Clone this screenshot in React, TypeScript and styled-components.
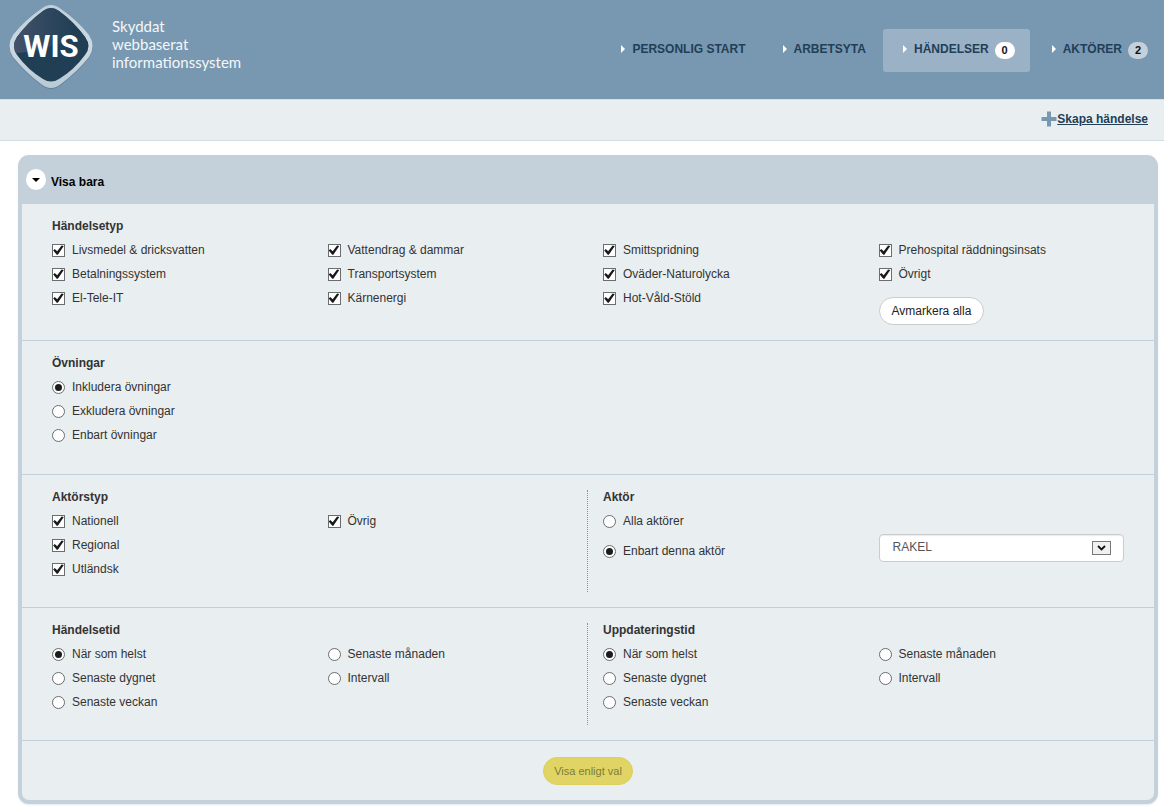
import React, { useState } from "react";
import styled, { createGlobalStyle, css } from "styled-components";

const GlobalStyle = createGlobalStyle`
  *, *::before, *::after { box-sizing: border-box; }
  body {
    margin: 0;
    background: #ffffff;
    color: #333333;
    font-family: "Liberation Sans", Arial, sans-serif;
    font-size: 12px;
    line-height: 24px;
  }
`;

const Header = styled.header`
  display: flex;
  justify-content: space-between;
  align-items: flex-start;
  min-height: 99px;
  padding-right: 1px;
  background: #7897b1;
`;

const Brand = styled.a`
  display: flex;
  gap: 16px;
  padding: 2px 0 0 6px;
  color: #f3f7fa;
  text-decoration: none;
`;

const Tagline = styled.span`
  padding-top: 15px;
  font-family: Lato, "Open Sans", sans-serif;
  font-size: 15px;
  line-height: 18px;
`;

const Nav = styled.nav`
  display: flex;
  gap: 2px;
  padding-top: 29px;
`;

const NavLink = styled.a<{ $active?: boolean }>`
  display: flex;
  align-items: center;
  height: 43px;
  padding: 0 15px 4px 20px;
  border: 0;
  border-radius: 3px;
  background: ${(p) => (p.$active ? "#9bb1c5" : "transparent")};
  color: #213f57;
  font-weight: bold;
  line-height: 18px;
  text-decoration: none;
  white-space: nowrap;

  &::before {
    content: "";
    margin-right: 7px;
    border-left: 4px solid #ffffff;
    border-top: 4px solid transparent;
    border-bottom: 4px solid transparent;
  }
`;

const Badge = styled.span<{ $light?: boolean }>`
  min-width: 20px;
  height: 17px;
  margin: 3px 0 0 6px;
  border-radius: 9px;
  background: ${(p) => (p.$light ? "#ffffff" : "#c4d0da")};
  color: #111111;
  font-size: 11px;
  line-height: 17px;
  text-align: center;
`;

const ActionBar = styled.div`
  display: flex;
  justify-content: flex-end;
  align-items: center;
  height: 42px;
  padding: 0 16px 2px 16px;
  border-top: 1px solid #d3dfe8;
  border-bottom: 1px solid #d3dde5;
  background: #e9eef1;
`;

const CreateLink = styled.a`
  display: flex;
  align-items: center;
  color: #213f57;
  font-weight: bold;
  text-decoration: underline;
`;

const Panel = styled.main`
  margin: 14px 6px 7px 18px;
  padding: 0 4px 4px;
  border-radius: 11px;
  background: #c4d0da;
  box-shadow: 0 1px 2px #e6eaed;
`;

const PanelHeader = styled.div`
  display: flex;
  align-items: center;
  gap: 5px;
  height: 49px;
  padding-left: 4px;
`;

const ToggleButton = styled.button`
  display: grid;
  place-items: center;
  width: 20px;
  height: 21px;
  padding: 0;
  border: 0;
  border-radius: 50%;
  background: #ffffff;
`;

const PanelTitle = styled.h1`
  margin: 0;
  padding-top: 4px;
  color: #000000;
  font-size: 12px;
  line-height: 24px;
`;

const PanelBody = styled.form`
  border-radius: 0 0 7px 7px;
  background: #e9eef1;
`;

const Section = styled.section<{ $split?: boolean }>`
  display: grid;
  grid-template-columns: repeat(${(p) => (p.$split ? 2 : 1)}, 1fr);
  grid-auto-rows: minmax(${(p) => (p.$split ? 102 : 103)}px, auto);
  padding: 15px 0 15px 30px;
  border-bottom: 1px solid #c1d0da;
`;

const Half = styled.div<{ $divided?: boolean }>`
  min-width: 0;
  ${(p) =>
    p.$divided &&
    css`
      margin-left: -16px;
      padding-left: 15px;
      border-left: 1px dotted #8c9399;
    `}
`;

const Group = styled.fieldset`
  min-width: 0;
  margin: 0;
  padding: 0;
  border: 0;
`;

const GroupTitle = styled.legend`
  margin: 0 0 5px;
  padding: 0;
  font-weight: bold;
  line-height: 14px;
`;

const Columns = styled.div<{ $count: number }>`
  display: grid;
  grid-template-columns: repeat(${(p) => p.$count}, 1fr);
`;

const Option = styled.label<{ $spaced?: boolean }>`
  display: flex;
  align-items: center;
  gap: 7px;
  height: 24px;
  margin-top: ${(p) => (p.$spaced ? 6 : 0)}px;
`;

const Checkbox = styled.input.attrs({ type: "checkbox" })`
  appearance: none;
  width: 13px;
  height: 13px;
  margin: 0;
  border: 1px solid #6a6d70;
  background: #ffffff;

  &:checked::before {
    content: "";
    display: block;
    width: 11px;
    height: 11px;
    background: #1a1a1a;
    clip-path: polygon(2% 54%, 16% 40%, 38% 62%, 78% 8%, 98% 14%, 44% 94%, 34% 94%);
  }
`;

const Radio = styled.input.attrs({ type: "radio" })`
  appearance: none;
  display: grid;
  place-items: center;
  width: 13px;
  height: 13px;
  margin: 0;
  border: 1px solid #6a6d70;
  border-radius: 50%;
  background: #ffffff;

  &:checked::before {
    content: "";
    width: 7px;
    height: 7px;
    border-radius: 50%;
    background: #1c1c1c;
  }
`;

const PillButton = styled.button<{ $primary?: boolean }>`
  height: 28px;
  padding: 0 ${(p) => (p.$primary ? 10 : 12)}px;
  border: 1px solid ${(p) => (p.$primary ? "#ddd058" : "#cccccc")};
  border-radius: 14px;
  background: ${(p) => (p.$primary ? "#e0d564" : "#ffffff")};
  color: ${(p) => (p.$primary ? "#7e7a38" : "#222222")};
  font-family: inherit;
  font-size: ${(p) => (p.$primary ? 11 : 12)}px;
`;

const ClearRow = styled.div`
  display: flex;
  padding-top: 11px;
`;

const SelectBox = styled.div`
  position: relative;
  margin: 25px 30px 0 0;
`;

const Select = styled.select`
  appearance: none;
  display: block;
  width: 100%;
  height: 28px;
  padding: 0 32px 2px 13px;
  border: 1px solid #cccccc;
  border-radius: 4px;
  background: #ffffff;
  box-shadow: inset 0 1px 1px #ececec;
  color: #555555;
  font-family: inherit;
  font-size: 12px;
`;

const SelectArrow = styled.svg`
  position: absolute;
  top: 7px;
  right: 13px;
  pointer-events: none;
`;

const Footer = styled.div`
  display: flex;
  justify-content: center;
  padding: 16px 0 15px;
`;

const Logo = () => (
  <svg width="90" height="90" viewBox="0 0 90 90" role="img" aria-label="WIS">
    <defs>
      <linearGradient id="rim" x1="0" y1="0" x2="0" y2="1">
        <stop offset="0" stopColor="#bfced9" />
        <stop offset="0.5" stopColor="#ccd9e1" />
        <stop offset="1" stopColor="#b9cad6" />
      </linearGradient>
      <linearGradient id="sheen" x1="0" y1="0" x2="1" y2="0">
        <stop offset="0.1" stopColor="#42526a" />
        <stop offset="0.75" stopColor="#203f55" />
      </linearGradient>
      <clipPath id="face">
        <path d="M37 9 Q45 3 53 9 Q68 20 79 35 Q86 44 79 53 Q68 68 53 77 Q45 82 37 77 Q22 68 11 53 Q5 44 11 35 Q22 20 37 9 Z" />
      </clipPath>
    </defs>
    <path
      d="M35 8 Q45 0 55 8 Q71 19 83 34 Q90 45 83 56 Q71 71 55 83 Q45 91 35 83 Q19 71 7 56 Q0 45 7 34 Q19 19 35 8 Z"
      fill="#56728a"
      opacity="0.6"
    />
    <path
      d="M35 7 Q45 -1 55 7 Q71 18 83 33 Q90 44 83 55 Q71 70 55 82 Q45 90 35 82 Q19 70 7 55 Q0 44 7 33 Q19 18 35 7 Z"
      fill="url(#rim)"
    />
    <g clipPath="url(#face)">
      <rect width="90" height="90" fill="#203f55" />
      <path d="M0 0 H90 V36 Q55 40 38 46 Q22 51 0 52 Z" fill="url(#sheen)" />
    </g>
    <text
      x="45"
      y="55"
      textAnchor="middle"
      fill="#ffffff"
      fontFamily="Roboto, Open Sans, sans-serif"
      fontSize="31"
      fontWeight="700"
    >
      WIS
    </text>
  </svg>
);

const PlusIcon = () => (
  <svg width="16" height="16" viewBox="0 0 16 16" aria-hidden="true">
    <path d="M6 0.5H10V6H15.5V10H10V15.5H6V10H0.5V6H6Z" fill="#7897b1" />
  </svg>
);

const Checks = ({ items }: { items: string[] }) => (
  <div>
    {items.map((item) => (
      <Option key={item}>
        <Checkbox defaultChecked />
        {item}
      </Option>
    ))}
  </div>
);

type RadiosProps = { name: string; items: string[]; selected?: string; spaced?: boolean };

const Radios = ({ name, items, selected, spaced }: RadiosProps) => (
  <div>
    {items.map((item, i) => (
      <Option key={item} $spaced={spaced && i > 0}>
        <Radio name={name} defaultChecked={item === selected} />
        {item}
      </Option>
    ))}
  </div>
);

const TimeGroup = ({ title, name }: { title: string; name: string }) => (
  <Group>
    <GroupTitle>{title}</GroupTitle>
    <Columns $count={2}>
      <Radios
        name={name}
        items={["När som helst", "Senaste dygnet", "Senaste veckan"]}
        selected="När som helst"
      />
      <Radios name={name} items={["Senaste månaden", "Intervall"]} />
    </Columns>
  </Group>
);

export default function App() {
  const [open, setOpen] = useState(true);

  return (
    <>
      <GlobalStyle />
      <Header>
        <Brand href="#">
          <Logo />
          <Tagline>
            Skyddat
            <br />
            webbaserat
            <br />
            informationssystem
          </Tagline>
        </Brand>
        <Nav>
          <NavLink href="#start">PERSONLIG START</NavLink>
          <NavLink href="#arbetsyta">ARBETSYTA</NavLink>
          <NavLink href="#handelser" $active>
            HÄNDELSER <Badge $light>0</Badge>
          </NavLink>
          <NavLink href="#aktorer">
            AKTÖRER <Badge>2</Badge>
          </NavLink>
        </Nav>
      </Header>
      <ActionBar>
        <CreateLink href="#skapa">
          <PlusIcon />
          <span>Skapa händelse</span>
        </CreateLink>
      </ActionBar>
      <Panel>
        <PanelHeader>
          <ToggleButton
            type="button"
            aria-label="Visa bara"
            aria-expanded={open}
            onClick={() => setOpen(!open)}
          >
            <svg width="8" height="4" viewBox="0 0 8 4" aria-hidden="true">
              <path d="M0 0H8L4 4Z" fill="#000000" />
            </svg>
          </ToggleButton>
          <PanelTitle>Visa bara</PanelTitle>
        </PanelHeader>
        {open && (
          <PanelBody onSubmit={(e) => e.preventDefault()}>
            <Section>
              <Group>
                <GroupTitle>Händelsetyp</GroupTitle>
                <Columns $count={4}>
                  <Checks items={["Livsmedel & dricksvatten", "Betalningssystem", "El-Tele-IT"]} />
                  <Checks items={["Vattendrag & dammar", "Transportsystem", "Kärnenergi"]} />
                  <Checks items={["Smittspridning", "Oväder-Naturolycka", "Hot-Våld-Stöld"]} />
                  <div>
                    <Checks items={["Prehospital räddningsinsats", "Övrigt"]} />
                    <ClearRow>
                      <PillButton type="button">Avmarkera alla</PillButton>
                    </ClearRow>
                  </div>
                </Columns>
              </Group>
            </Section>
            <Section>
              <Group>
                <GroupTitle>Övningar</GroupTitle>
                <Radios
                  name="ovningar"
                  items={["Inkludera övningar", "Exkludera övningar", "Enbart övningar"]}
                  selected="Inkludera övningar"
                />
              </Group>
            </Section>
            <Section $split>
              <Half>
                <Group>
                  <GroupTitle>Aktörstyp</GroupTitle>
                  <Columns $count={2}>
                    <Checks items={["Nationell", "Regional", "Utländsk"]} />
                    <Checks items={["Övrig"]} />
                  </Columns>
                </Group>
              </Half>
              <Half $divided>
                <Group>
                  <GroupTitle>Aktör</GroupTitle>
                  <Columns $count={2}>
                    <Radios
                      name="aktor"
                      items={["Alla aktörer", "Enbart denna aktör"]}
                      selected="Enbart denna aktör"
                      spaced
                    />
                    <SelectBox>
                      <Select aria-label="Aktör" defaultValue="RAKEL">
                        <option>RAKEL</option>
                      </Select>
                      <SelectArrow width="19" height="14" viewBox="0 0 19 14" aria-hidden="true">
                        <rect x="0.5" y="0.5" width="18" height="13" fill="#f0f0f0" stroke="#77797b" />
                        <path d="M6 5L9.5 8.5L13 5" fill="none" stroke="#111111" strokeWidth="1.8" />
                      </SelectArrow>
                    </SelectBox>
                  </Columns>
                </Group>
              </Half>
            </Section>
            <Section $split>
              <Half>
                <TimeGroup title="Händelsetid" name="handelsetid" />
              </Half>
              <Half $divided>
                <TimeGroup title="Uppdateringstid" name="uppdateringstid" />
              </Half>
            </Section>
            <Footer>
              <PillButton type="submit" $primary>
                Visa enligt val
              </PillButton>
            </Footer>
          </PanelBody>
        )}
      </Panel>
    </>
  );
}
